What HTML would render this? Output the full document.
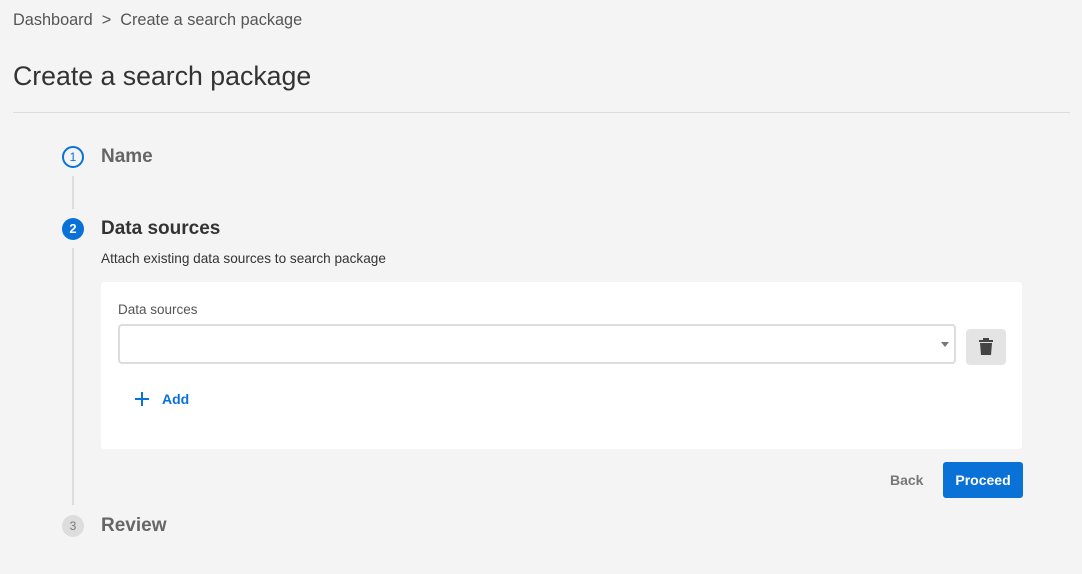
<!DOCTYPE html>
<html><head><style>
*{margin:0;padding:0;box-sizing:border-box}
body{width:1082px;height:574px;background:#f4f4f4;font-family:"Liberation Sans",sans-serif;position:relative;overflow:hidden;color:#333}
.a{position:absolute}
</style></head><body>
<div class="a" style="left:13px;top:11px;font-size:16.3px;color:#555">Dashboard &nbsp;&gt;&nbsp; Create a search package</div>
<div class="a" style="left:13px;top:61px;font-size:26.7px;color:#333">Create a search package</div>
<div class="a" style="left:13px;top:112px;width:1057px;height:1px;background:#ddd"></div>
<div class="a" style="left:72px;top:176px;width:2px;height:33px;background:#ddd"></div>
<div class="a" style="left:72px;top:248px;width:2px;height:257px;background:#ddd"></div>
<div class="a" style="left:62px;top:146px;width:22px;height:22px;border:2px solid #0a72d6;border-radius:50%;font-size:12px;color:#0a72d6;text-align:center;line-height:18px;background:#f4f4f4">1</div>
<div class="a" style="left:101px;top:146px;font-size:19px;font-weight:bold;color:#666">Name</div>
<div class="a" style="left:62px;top:218px;width:22px;height:22px;border-radius:50%;background:#0a72d6;font-size:13px;font-weight:bold;color:#fff;text-align:center;line-height:22px">2</div>
<div class="a" style="left:101px;top:218px;font-size:19px;font-weight:bold;color:#333">Data sources</div>
<div class="a" style="left:101px;top:251px;font-size:13.6px;color:#333">Attach existing data sources to search package</div>
<div class="a" style="left:101px;top:282px;width:921px;height:167px;background:#fff;border-radius:3px"></div>
<div class="a" style="left:118px;top:302px;font-size:13.5px;color:#555">Data sources</div>
<div class="a" style="left:118px;top:324px;width:838px;height:40px;border:2px solid #ddd;border-radius:4px;background:#fff"></div>
<div class="a" style="left:941px;top:342px;width:0;height:0;border-left:4px solid transparent;border-right:4px solid transparent;border-top:5px solid #777"></div>
<div class="a" style="left:966px;top:329px;width:40px;height:36px;background:#e4e4e4;border-radius:4px">
<svg width="40" height="36" viewBox="0 0 40 36"><rect x="13" y="11" width="14" height="2" fill="#444"/><rect x="17" y="9" width="6" height="2" fill="#444"/><path d="M14 14h12l-1 12h-10z" fill="#444"/></svg></div>
<svg class="a" style="left:134px;top:391px" width="16" height="16" viewBox="0 0 16 16"><path d="M8 1v14M1 8h14" stroke="#0a72d6" stroke-width="2"/></svg>
<div class="a" style="left:162px;top:391px;font-size:14px;font-weight:bold;color:#0a72d6">Add</div>
<div class="a" style="left:890px;top:472px;font-size:14px;font-weight:bold;color:#777">Back</div>
<div class="a" style="left:943px;top:462px;width:80px;height:36px;background:#0a72d6;border-radius:3px;color:#fff;font-size:14px;font-weight:bold;text-align:center;line-height:36px">Proceed</div>
<div class="a" style="left:62px;top:515px;width:22px;height:22px;border-radius:50%;background:#ddd;font-size:12px;color:#777;text-align:center;line-height:22px">3</div>
<div class="a" style="left:101px;top:515px;font-size:19px;font-weight:bold;color:#666">Review</div>
</body></html>
